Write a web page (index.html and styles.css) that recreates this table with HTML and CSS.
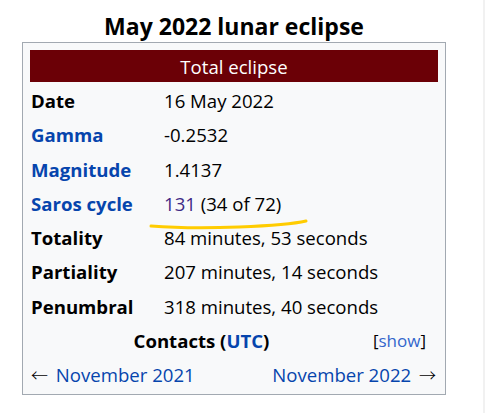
FILE: index.html
```html
<!DOCTYPE html>
<html lang="en">
<head>
<meta charset="utf-8">
<title>May 2022 lunar eclipse</title>
<link rel="stylesheet" href="styles.css">
</head>
<body>
<div class="page">
  <div class="caption">May 2022 lunar eclipse</div>
  <div class="infobox">
    <div class="banner">Total eclipse</div>
    <div class="grid">
      <div class="label">Date</div><div class="value">16 May 2022</div>
      <div class="label link">Gamma</div><div class="value">-0.2532</div>
      <div class="label link">Magnitude</div><div class="value">1.4137</div>
      <div class="label link">Saros cycle</div><div class="value saros"><span class="visited">131</span> (34 of 72)<svg class="scribble" width="170" height="14" viewBox="0 0 170 14"><path d="M2 9 Q40 12 90 10 T157 4" fill="none" stroke="#ffcc00" stroke-width="3" stroke-linecap="round"/></svg></div>
      <div class="label">Totality</div><div class="value">84 minutes, 53 seconds</div>
      <div class="label">Partiality</div><div class="value">207 minutes, 14 seconds</div>
      <div class="label">Penumbral</div><div class="value">318 minutes, 40 seconds</div>
      <div class="contacts">
        <span class="contacts-title">Contacts (<span class="link">UTC</span>)</span>
        <span class="toggle">[<span class="show">show</span>]</span>
      </div>
      <div class="nav">
        <span><span class="arrow arrow-left">←</span> <span class="link">November 2021</span></span>
        <span><span class="link">November 2022</span> <span class="arrow arrow-right">→</span></span>
      </div>
    </div>
  </div>
</div>
</body>
</html>
```
FILE: styles.css
```css
html {
  background: linear-gradient(to right, #ffffff 483px, #f1f1f1 483px);
  min-height: 100%;
}
body {
  margin: 0;
  font-family: "Open Sans", "Noto Sans", sans-serif;
  color: #000;
}
.page {
  width: 424px;
  margin-left: 22px;
  padding-top: 10px;
}
.caption {
  font-size: 23px;
  font-weight: 700;
  line-height: 32px;
  text-align: center;
}
.infobox {
  border: 1px solid #a2a9b1;
  background: #f8f9fa;
  padding: 7px 7px 4px 7px;
}
.banner {
  background: #6b0006;
  color: #fff;
  height: 32px;
  line-height: 33px;
  text-align: center;
  font-size: 18.6px;
}
.grid {
  display: grid;
  grid-template-columns: 134px 1fr;
  row-gap: 3px;
  padding-top: 3px;
  font-size: 18.6px;
  line-height: 26.25px;
}
.label, .value {
  padding: 3px 0 2px 0;
}
.label {
  font-weight: 700;
  padding-left: 1px;
}
.link {
  color: #0645ad;
}
.visited {
  color: #3f2a86;
}
.saros {
  position: relative;
}
.scribble {
  position: absolute;
  left: -15px;
  top: 29px;
}
.contacts {
  grid-column: 1 / -1;
  display: flex;
  align-items: center;
  padding: 3px 12px 2px 0;
}
.contacts-title {
  flex: 1;
  text-align: center;
  font-weight: 700;
}
.toggle {
  font-size: 17px;
}
.show {
  color: #3366cc;
}
.arrow {
  font-family: "Noto Sans CJK SC", sans-serif;
  font-size: 17px;
  font-weight: 300;
}
.arrow-left {
  margin-right: 3px;
}
.arrow-right {
  margin-left: 3px;
}
.nav {
  grid-column: 1 / -1;
  display: flex;
  justify-content: space-between;
  padding: 3px 2px 2px 1px;
}
```
